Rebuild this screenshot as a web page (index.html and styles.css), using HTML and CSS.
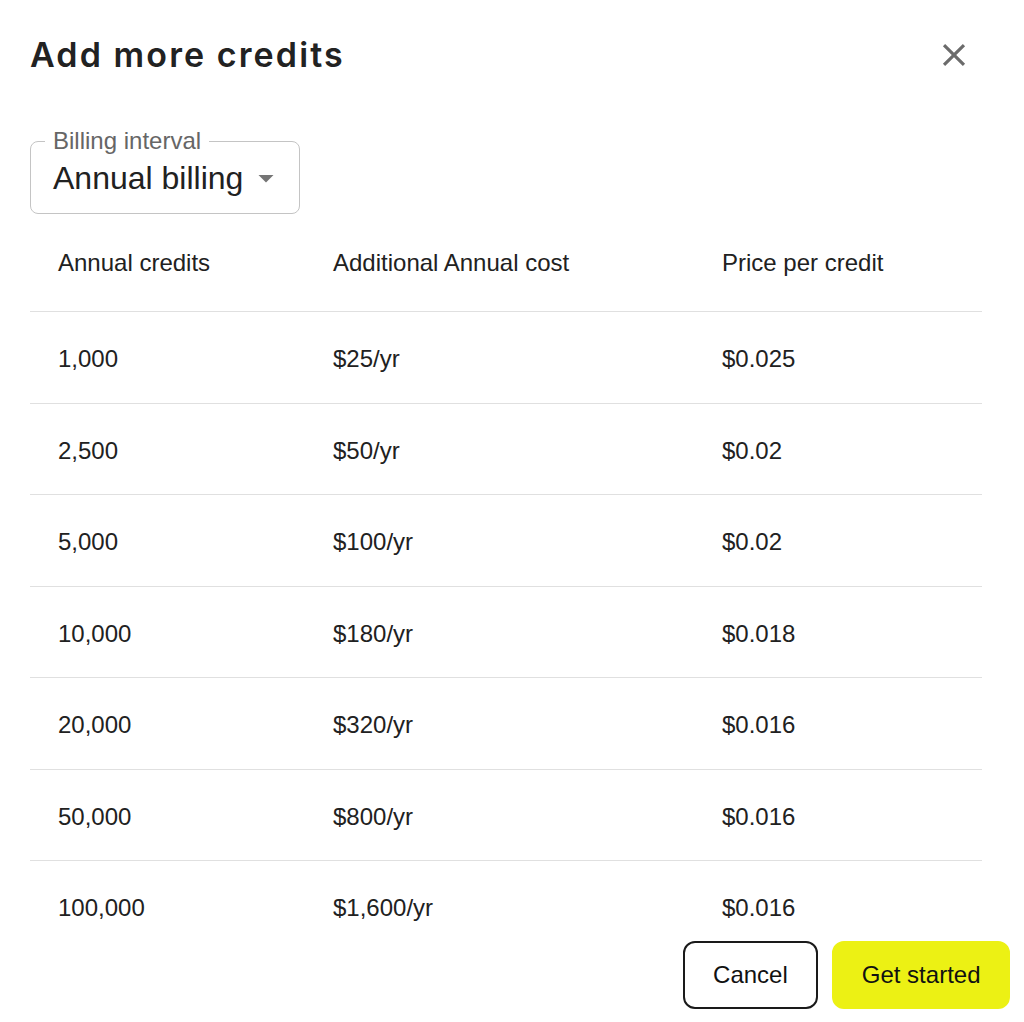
FILE: index.html
```html
<!DOCTYPE html>
<html lang="en">
<head>
    <meta charset="UTF-8">
    <meta name="viewport" content="width=device-width, initial-scale=1.0">
    <title>Add more credits</title>
    <link rel="stylesheet" href="styles.css">
</head>
<body>
    <div class="dialog">
        <div class="dialog-header">
            <h1>Add more credits</h1>
            <button class="close-btn" aria-label="Close">
                <svg viewBox="0 0 24 24" width="38" height="38">
                    <path d="M19 6.41 17.59 5 12 10.59 6.41 5 5 6.41 10.59 12 5 17.59 6.41 19 12 13.41 17.59 19 19 17.59 13.41 12z" fill="#6b6b6b"/>
                </svg>
            </button>
        </div>
        <div class="dialog-content">
            <fieldset class="select-field">
                <legend>Billing interval</legend>
                <div class="select-value">
                    <span>Annual billing</span>
                    <svg viewBox="0 0 24 24" width="36" height="36">
                        <path d="M7 10l5 5 5-5z" fill="#757575"/>
                    </svg>
                </div>
            </fieldset>
            <table class="credits-table">
                <colgroup>
                    <col class="col-credits">
                    <col class="col-cost">
                    <col>
                </colgroup>
                <thead>
                    <tr>
                        <th>Annual credits</th>
                        <th>Additional Annual cost</th>
                        <th>Price per credit</th>
                    </tr>
                </thead>
                <tbody>
                    <tr><td>1,000</td><td>$25/yr</td><td>$0.025</td></tr>
                    <tr><td>2,500</td><td>$50/yr</td><td>$0.02</td></tr>
                    <tr><td>5,000</td><td>$100/yr</td><td>$0.02</td></tr>
                    <tr><td>10,000</td><td>$180/yr</td><td>$0.018</td></tr>
                    <tr><td>20,000</td><td>$320/yr</td><td>$0.016</td></tr>
                    <tr><td>50,000</td><td>$800/yr</td><td>$0.016</td></tr>
                    <tr><td>100,000</td><td>$1,600/yr</td><td>$0.016</td></tr>
                </tbody>
            </table>
        </div>
        <div class="dialog-actions">
            <button class="btn btn-outline">Cancel</button>
            <button class="btn btn-primary">Get started</button>
        </div>
    </div>
</body>
</html>
```

FILE: styles.css
```css
body {
    margin: 0;
    padding: 0;
    background: #fff;
    color: #212121;
    font-family: 'Liberation Sans', Arial, sans-serif;
}
.dialog {
    height: 1022px;
    display: flex;
    flex-direction: column;
    overflow: hidden;
}
.dialog-header {
    display: flex;
    align-items: center;
    justify-content: space-between;
    padding: 34px 51px 0 30px;
}
h1 {
    margin: 0;
    font-family: 'Inter', 'Liberation Sans', sans-serif;
    font-weight: 600;
    font-size: 34px;
    line-height: 41px;
    letter-spacing: 2.1px;
    color: #222;
}
.close-btn {
    border: none;
    background: none;
    padding: 0;
    width: 38px;
    height: 38px;
    cursor: pointer;
}
.close-btn svg {
    display: block;
}
.dialog-content {
    flex: 1;
    overflow: hidden;
    padding: 53px 42px 0 30px;
}
.select-field {
    width: 270px;
    box-sizing: border-box;
    margin: 0;
    padding: 0 12px 15px 14px;
    border: 1.5px solid #c4c4c4;
    border-radius: 8px;
}
.select-field legend {
    padding: 0 8px;
    font-size: 24px;
    line-height: 26px;
    color: #666;
}
.select-value {
    display: flex;
    align-items: center;
    gap: 5px;
    margin-top: 4px;
    padding-left: 8px;
    height: 40px;
    font-size: 32px;
    color: #212121;
}
.select-value svg {
    display: block;
}
.credits-table {
    width: 100%;
    margin-top: 2px;
    border-collapse: collapse;
    table-layout: fixed;
}
.col-credits {
    width: 275px;
}
.col-cost {
    width: 389px;
}
.credits-table th,
.credits-table td {
    padding: 33px 28px 29.5px;
    font-size: 24px;
    line-height: 28px;
    font-weight: normal;
    text-align: left;
    color: #212121;
    border-bottom: 1px solid #e0e0e0;
}
.credits-table th {
    padding-top: 33px;
    padding-bottom: 34px;
}
.dialog-actions {
    display: flex;
    justify-content: flex-end;
    gap: 14px;
    padding: 11px 14px 13px;
}
.btn {
    height: 68px;
    padding: 0 28px;
    border-radius: 12px;
    font-family: 'Liberation Sans', Arial, sans-serif;
    font-size: 24px;
    color: #111;
    cursor: pointer;
}
.btn-outline {
    background: #fff;
    border: 2px solid #1a1a1a;
    padding: 0 28.5px;
}
.btn-primary {
    background: #ecf114;
    border: 2px solid #ecf114;
    padding: 0 27.5px;
}
```
